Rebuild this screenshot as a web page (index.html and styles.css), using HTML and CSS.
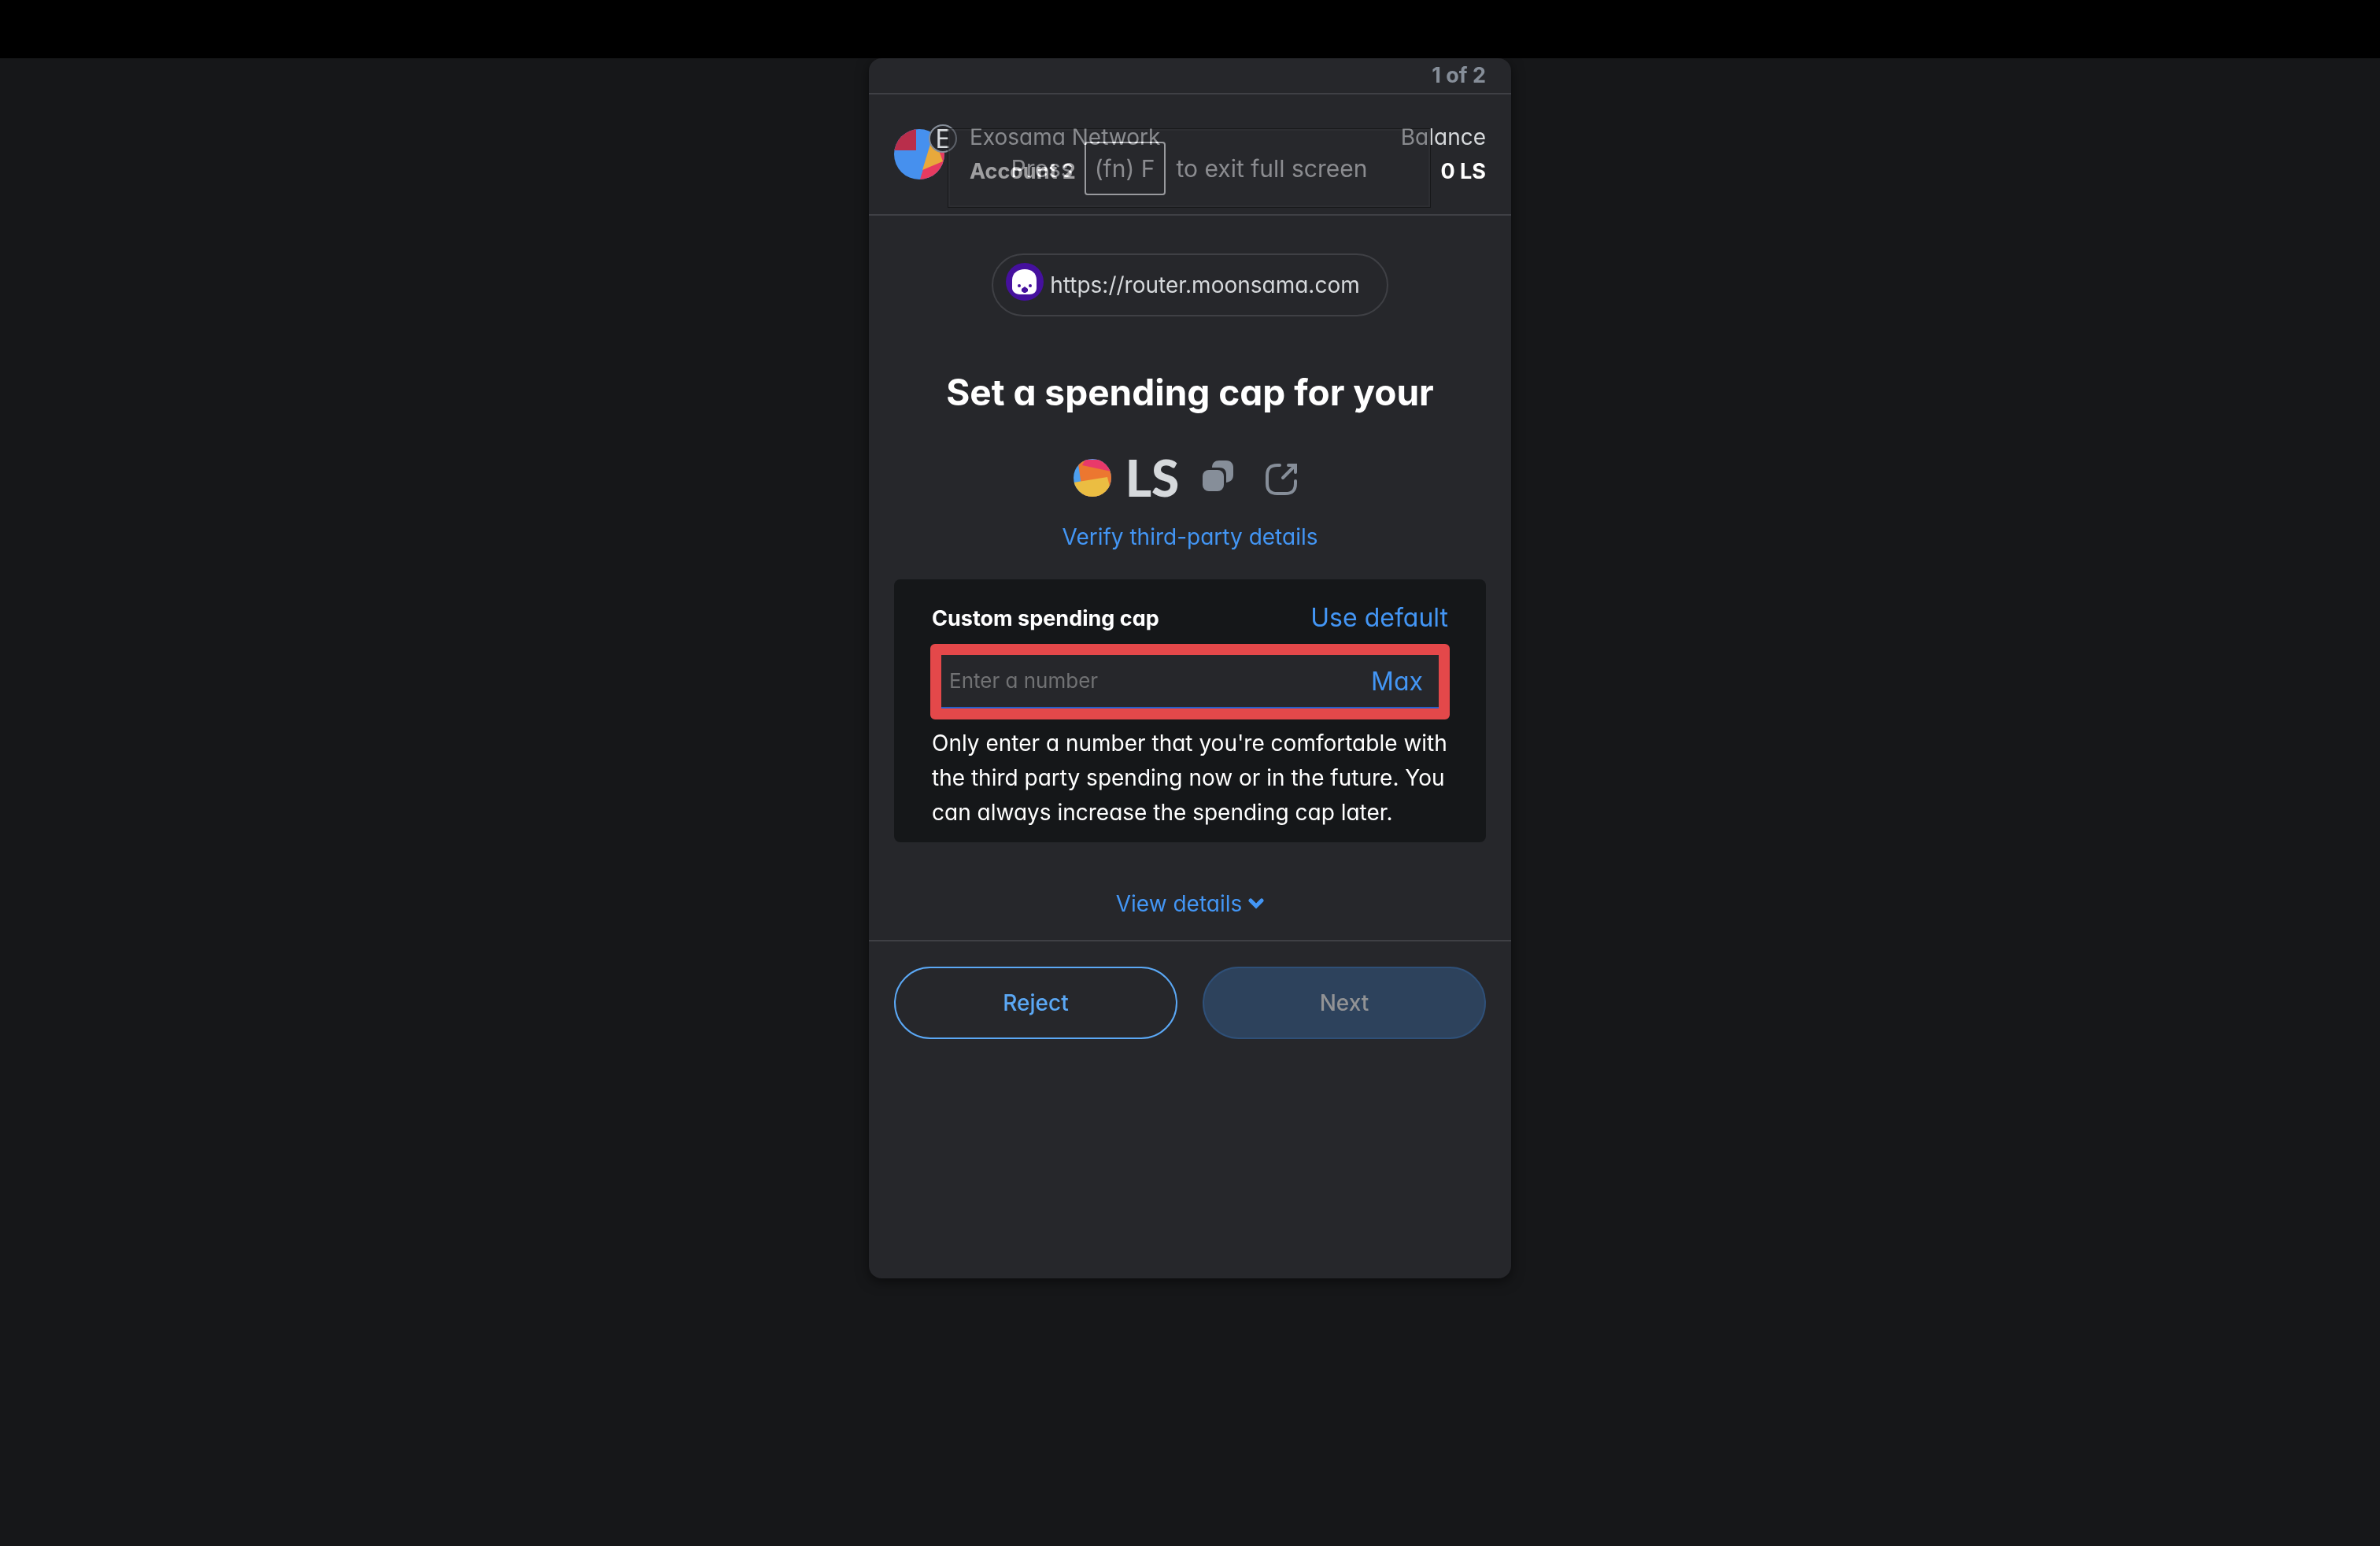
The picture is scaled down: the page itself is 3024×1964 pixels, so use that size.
FILE: index.html
```
<!DOCTYPE html>
<html lang="en">
<head>
  <meta charset="utf-8">
  <meta name="viewport" content="width=device-width, initial-scale=1">
  <title>Set a spending cap</title>
  <link rel="stylesheet" href="styles.css">
</head>
<body>
  <div class="menu-bar"></div>
  <main class="card">
    <div class="steps">1 of 2</div>

    <header class="network">
      <div class="identicon">
        <svg class="identicon-art" viewBox="0 0 64 64" aria-hidden="true">
          <clipPath id="account-clip"><circle cx="32" cy="32" r="32"/></clipPath>
          <g clip-path="url(#account-clip)">
            <path fill="#4690ee" d="M0 0h64v64H0z"/>
            <path fill="#b92e4b" d="M0 0h28v27H0z"/>
            <path fill="#e63b60" d="M47 18L33 64h31V18z"/>
            <path fill="#e8a93b" d="M47 16L36 52l26-11-9-25z"/>
          </g>
        </svg>
        <span class="badge">E</span>
      </div>
      <div class="account">
        <span class="muted">Exosama Network</span>
        <strong>Account 2</strong>
      </div>
      <div class="balance">
        <span class="muted">Balance</span>
        <strong>0 LS</strong>
      </div>
      <div class="fullscreen-hint">
        <span>Press</span>
        <kbd>(fn) F</kbd>
        <span>to exit full screen</span>
      </div>
    </header>

    <section class="content">
      <div class="origin">
        <svg class="origin-icon" viewBox="0 0 48 48" aria-hidden="true">
          <circle cx="24" cy="24" r="24" fill="#45109e"/>
          <path fill="#fff" d="M8 27V22C8 13 15 8 24 8s15 5 15 14v10c0 5-4 8-9 8H18c-6 0-10-4-10-8z"/>
          <path fill="#45109e" d="M20 33l4-3 4 3v3l-3 2h-2l-3-2z"/>
          <circle cx="17" cy="29" r="2" fill="#45109e"/>
          <circle cx="31" cy="29" r="2" fill="#45109e"/>
        </svg>
        <span>https://router.moonsama.com</span>
      </div>

      <h1 class="title">Set a spending cap for your</h1>

      <div class="token">
        <svg class="token-icon" viewBox="0 0 48 48" aria-hidden="true">
          <clipPath id="token-clip"><circle cx="24" cy="24" r="24"/></clipPath>
          <g clip-path="url(#token-clip)">
            <path fill="#4e9fee" d="M0 0h48v48H0z"/>
            <path fill="#ec7730" d="M6 6l8-5 34 12v35H12z"/>
            <path fill="#e9396a" d="M11 8l4-7h33v15z"/>
            <path fill="#ebbd42" d="M0 30l43-7 3 12v13H0z"/>
          </g>
        </svg>
        <span class="token-name">LS</span>
        <button class="icon-button" type="button" aria-label="Copy address">
          <svg viewBox="0 0 40 48" aria-hidden="true">
            <rect x="0" y="14" width="27" height="27" rx="8" fill="#868e99"/>
            <path fill="#868e99" d="M12 11c0-6 4-9 9-9h9c6 0 9 4 9 9v9c0 6-3 9-9 10V20c0-6-3-9-9-9z"/>
          </svg>
        </button>
        <button class="icon-button export" type="button" aria-label="Open in explorer">
          <svg viewBox="0 0 40 48" aria-hidden="true">
            <path fill="none" stroke="#868e99" stroke-width="4" stroke-linecap="round" d="M18 8h-3C6 8 2 12 2 21v10c0 9 4 13 13 13h10c9 0 13-4 13-13v-3M22 24L36 10"/>
            <path fill="none" stroke="#868e99" stroke-width="4" stroke-linecap="round" d="M29 8h9v9"/>
          </svg>
        </button>
      </div>

      <a class="link" href="#verify">Verify third-party details</a>

      <form class="cap" id="cap-form">
        <div class="cap-head">
          <label for="cap-value">Custom spending cap</label>
          <button class="text-button" type="button">Use default</button>
        </div>
        <div class="field">
          <input id="cap-value" type="text" inputmode="decimal" placeholder="Enter a number">
          <button class="text-button" type="button">Max</button>
        </div>
        <p class="cap-note">Only enter a number that you're comfortable with the third party spending now or in the future. You can always increase the spending cap later.</p>
      </form>

      <a class="link details" href="#details">View details
        <svg class="chevron" viewBox="0 0 20 14" aria-hidden="true"><path fill="none" stroke="currentColor" stroke-width="5" stroke-linecap="round" d="M3 3l7 7 7-7"/></svg>
      </a>
    </section>

    <footer class="actions">
      <button class="action reject" type="button">Reject</button>
      <button class="action next" type="submit" form="cap-form" disabled>Next</button>
    </footer>
  </main>
</body>
</html>
```
FILE: styles.css
```
* {
  box-sizing: border-box;
}

body {
  margin: 0;
  min-height: 100vh;
  background: #161719;
  color: #fff;
  font: 28px/44px Inter, sans-serif;
  font-feature-settings: "cv11";
}

button,
input {
  font: inherit;
  font-feature-settings: inherit;
}

button {
  padding: 0;
  border: 0;
  background: none;
  cursor: pointer;
}

strong,
label {
  font-size: 27px;
  font-weight: 700;
}

.menu-bar {
  position: relative;
  z-index: 1;
  height: 74px;
  background: #000;
}

.card {
  width: 100%;
  max-width: 816px;
  min-height: calc(100vh - 414px);
  margin: 0 auto;
  border-radius: 16px;
  background: #26272b;
  box-shadow: 0 4px 16px rgba(0, 0, 0, 0.5);
}

.steps {
  padding: 0 32px;
  border-bottom: 2px solid #3f4045;
  color: #868e99;
  font-size: 27px;
  font-weight: 700;
  text-align: right;
}

/* Network header */

.network {
  position: relative;
  display: flex;
  align-items: center;
  padding: 32px;
  border-bottom: 2px solid #3f4045;
}

.identicon {
  position: relative;
  width: 64px;
  height: 64px;
  margin-right: 32px;
}

.identicon-art {
  display: block;
  width: 100%;
  height: 100%;
}

.badge {
  position: absolute;
  top: -6px;
  right: -16px;
  width: 36px;
  height: 36px;
  border: 2px solid #868e99;
  border-radius: 50%;
  background: #26272b;
  color: #d6d9dc;
  font-size: 32px;
  line-height: 34px;
  text-align: center;
}

.account,
.balance {
  display: flex;
  flex-direction: column;
}

.balance {
  margin-left: auto;
  text-align: right;
}

.muted {
  color: #d6d9dc;
}

/* Fading browser notice that lies over the header */

.fullscreen-hint {
  position: absolute;
  inset: 43px 102px 8px 100px;
  display: flex;
  align-items: center;
  justify-content: center;
  gap: 14px;
  border: 1px solid rgba(0, 0, 0, 0.4);
  background: rgba(42, 43, 47, 0.45);
  box-shadow: inset 0 0 0 2px rgba(255, 255, 255, 0.03);
  font-size: 30px;
  font-feature-settings: normal;
}

.fullscreen-hint span,
.fullscreen-hint kbd {
  color: #646464;
  mix-blend-mode: plus-lighter;
}

.fullscreen-hint kbd {
  padding: 10px 11px;
  border: 2px solid #727272;
  border-radius: 4px;
  font: inherit;
  line-height: 44px;
}

/* Request content */

.content {
  display: flex;
  flex-direction: column;
  align-items: center;
  padding: 48px 32px 24px;
  border-bottom: 2px solid #3f4045;
}

.origin {
  display: flex;
  align-items: center;
  gap: 8px;
  padding: 12px 34px 12px 16px;
  border: 2px solid #3f4045;
  border-radius: 40px;
  color: #d6d9dc;
}

.origin span {
  padding: 4px 0;
}

.origin-icon {
  width: 48px;
  height: 48px;
  margin: -2px 0 6px;
}

.title {
  margin: 64px 0 42px;
  font-size: 46px;
  font-weight: 700;
  line-height: 64px;
}

.token {
  display: flex;
  align-items: center;
  height: 70px;
  padding-right: 12px;
}

.token-icon {
  width: 48px;
  height: 48px;
}

.token-name {
  margin: 0 30px 0 18px;
  color: #d6d9dc;
  font: 900 64px/70px Lato, sans-serif;
}

.icon-button {
  width: 40px;
  height: 48px;
}

.icon-button svg {
  display: block;
}

.export {
  margin-left: 40px;
}

.link {
  color: #4396f5;
  text-decoration: none;
}

.token + .link {
  margin: 18px 0 32px;
}

/* Spending cap form */

.cap {
  width: 100%;
  padding: 26px 46px 16px;
  border-radius: 8px;
  background: #151719;
}

.cap-head {
  display: flex;
  align-items: flex-end;
  justify-content: space-between;
  margin-bottom: 10px;
  padding: 0 2px;
}

.text-button {
  color: #4396f5;
  font-size: 32px;
  line-height: 46px;
}

.field {
  display: flex;
  align-items: center;
  height: 96px;
  padding: 0 20px 0 10px;
  border: 14px solid #e4484a;
  border-radius: 6px;
  background: #26272b;
  box-shadow: inset 0 -2px #2560cc;
}

.field input {
  flex: 1;
  min-width: 0;
  padding: 0 0 2px;
  border: 0;
  outline: 0;
  background: none;
  color: #fff;
  font-size: 26px;
}

.field input::placeholder {
  color: #717274;
  opacity: 1;
}

.cap-note {
  margin: 8px 0 0;
  padding: 0 2px;
}

.details {
  display: flex;
  align-items: center;
  gap: 8px;
  margin-top: 56px;
}

.chevron {
  width: 20px;
  height: 14px;
}

/* Footer */

.actions {
  display: grid;
  grid-template-columns: 1fr 1fr;
  gap: 32px;
  padding: 32px;
}

.action {
  height: 92px;
  border: 2px solid #5ba8f5;
  border-radius: 46px;
  color: #5ba8f5;
  font-weight: 500;
}

.next {
  border-color: #2f5078;
  background: #2d425c;
  color: #929395;
}
```
